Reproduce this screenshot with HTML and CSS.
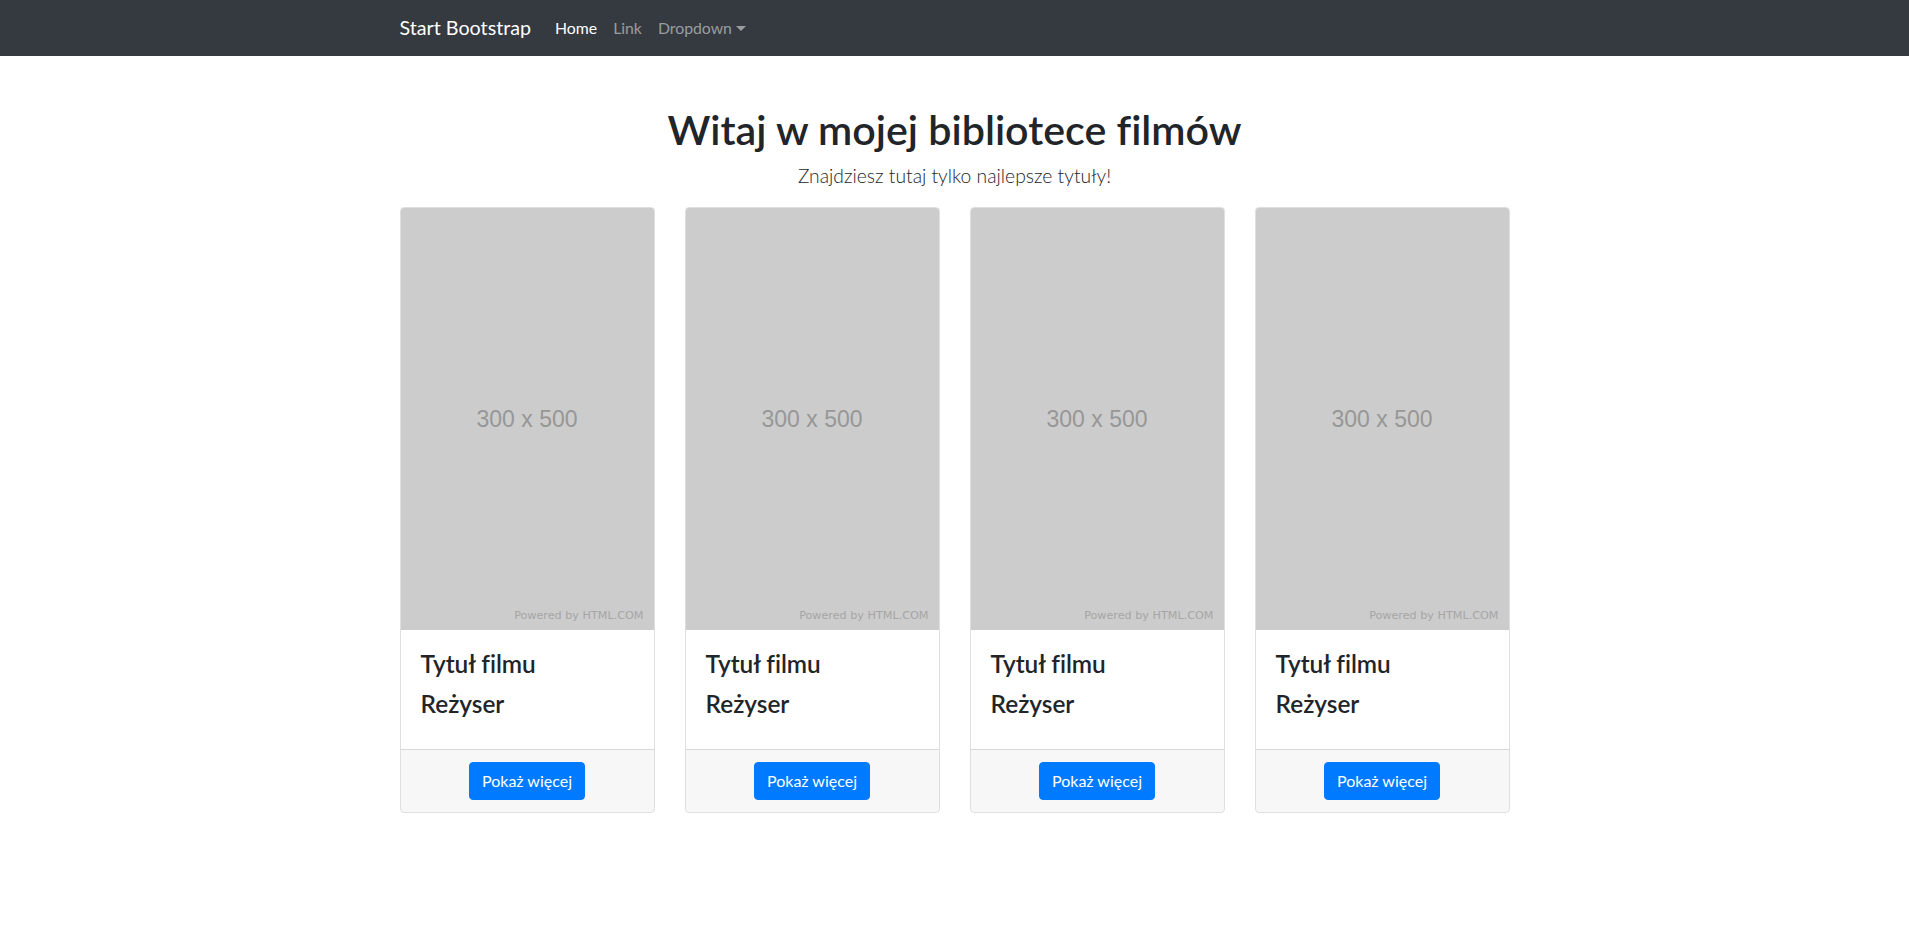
FILE: index.html
```html
<!DOCTYPE html>
<html lang="pl">
<head>
<meta charset="utf-8">
<title>Biblioteka filmów</title>
<link rel="stylesheet" href="styles.css">
</head>
<body>
<nav class="navbar">
  <div class="container nav-inner">
    <a class="brand" href="#">Start Bootstrap</a>
    <ul class="nav-list">
      <li><a class="nav-link active" href="#">Home</a></li>
      <li><a class="nav-link" href="#">Link</a></li>
      <li><a class="nav-link dropdown" href="#">Dropdown<span class="caret"></span></a></li>
    </ul>
  </div>
</nav>
<main class="container main">
  <h1 class="title">Witaj w mojej bibliotece filmów</h1>
  <p class="lead">Znajdziesz tutaj tylko najlepsze tytuły!</p>
  <div class="cards">
    <div class="card">
      <div class="poster"><span class="poster-size">300 x 500</span><span class="poster-credit">Powered by HTML.COM</span></div>
      <div class="card-body"><h4 class="card-title">Tytuł filmu</h4><h4 class="card-sub">Reżyser</h4></div>
      <div class="card-footer"><a class="btn" href="#">Pokaż więcej</a></div>
    </div>
    <div class="card">
      <div class="poster"><span class="poster-size">300 x 500</span><span class="poster-credit">Powered by HTML.COM</span></div>
      <div class="card-body"><h4 class="card-title">Tytuł filmu</h4><h4 class="card-sub">Reżyser</h4></div>
      <div class="card-footer"><a class="btn" href="#">Pokaż więcej</a></div>
    </div>
    <div class="card">
      <div class="poster"><span class="poster-size">300 x 500</span><span class="poster-credit">Powered by HTML.COM</span></div>
      <div class="card-body"><h4 class="card-title">Tytuł filmu</h4><h4 class="card-sub">Reżyser</h4></div>
      <div class="card-footer"><a class="btn" href="#">Pokaż więcej</a></div>
    </div>
    <div class="card">
      <div class="poster"><span class="poster-size">300 x 500</span><span class="poster-credit">Powered by HTML.COM</span></div>
      <div class="card-body"><h4 class="card-title">Tytuł filmu</h4><h4 class="card-sub">Reżyser</h4></div>
      <div class="card-footer"><a class="btn" href="#">Pokaż więcej</a></div>
    </div>
  </div>
</main>
</body>
</html>
```
FILE: styles.css
```css
* { box-sizing: border-box; }
body {
  margin: 0;
  font-family: Lato, "Open Sans", sans-serif;
  font-size: 16px;
  line-height: 1.5;
  color: #212529;
  background: #fff;
  font-variant-ligatures: none;
}
a { text-decoration: none; }
.container { width: 1140px; margin: 0 auto; padding: 0 15px; }
.navbar { background: #343a40; height: 56px; }
.nav-inner { display: flex; align-items: center; height: 56px; }
.brand { color: #fff; font-size: 19.7px; line-height: 30px; margin-right: 16px; }
.nav-list { display: flex; list-style: none; margin: 0; padding: 0; }
.nav-link { display: block; padding: 8px; color: rgba(255,255,255,.5); font-size: 15.8px; line-height: 24px; }
.nav-link.active { color: #fff; }
.caret {
  display: inline-block; margin-left: 4px; vertical-align: 3px;
  border-top: 5px solid currentColor; border-left: 5px solid transparent; border-right: 5px solid transparent;
}
.main { text-align: center; padding-top: 49px; }
.title { font-size: 41.2px; font-weight: 600; line-height: 48px; margin: 0 0 8px; }
.lead { font-size: 19.3px; font-weight: 300; line-height: 30px; margin: 0 0 16px; }
.cards { display: grid; grid-template-columns: repeat(4, 1fr); column-gap: 30px; text-align: left; }
.card { border: 1px solid rgba(0,0,0,.125); border-radius: 4px; overflow: hidden; display: flex; flex-direction: column; }
.poster { position: relative; aspect-ratio: 300 / 500; background: #ccc; display: flex; align-items: center; justify-content: center; }
.poster-size { font-family: "Liberation Sans", Arial, sans-serif; font-size: 23px; color: #979797; }
.poster-credit { position: absolute; right: 10px; bottom: 8px; font-family: "DejaVu Sans", sans-serif; font-size: 11.2px; line-height: 12px; color: #a6a6a6; }
.card-body { padding: 20px; }
.card-title, .card-sub { font-size: 24.4px; font-weight: 600; line-height: 28.8px; margin: 0 0 12px; }
.card-sub { margin-bottom: 10px; }
.card-footer { border-top: 1px solid rgba(0,0,0,.125); background: rgba(0,0,0,.03); padding: 12px 20px; text-align: center; }
.btn { display: inline-block; background: #007bff; color: #fff; border: 1px solid #007bff; border-radius: 4px; padding: 6px 12px; line-height: 24px; font-size: 16px; }
```
